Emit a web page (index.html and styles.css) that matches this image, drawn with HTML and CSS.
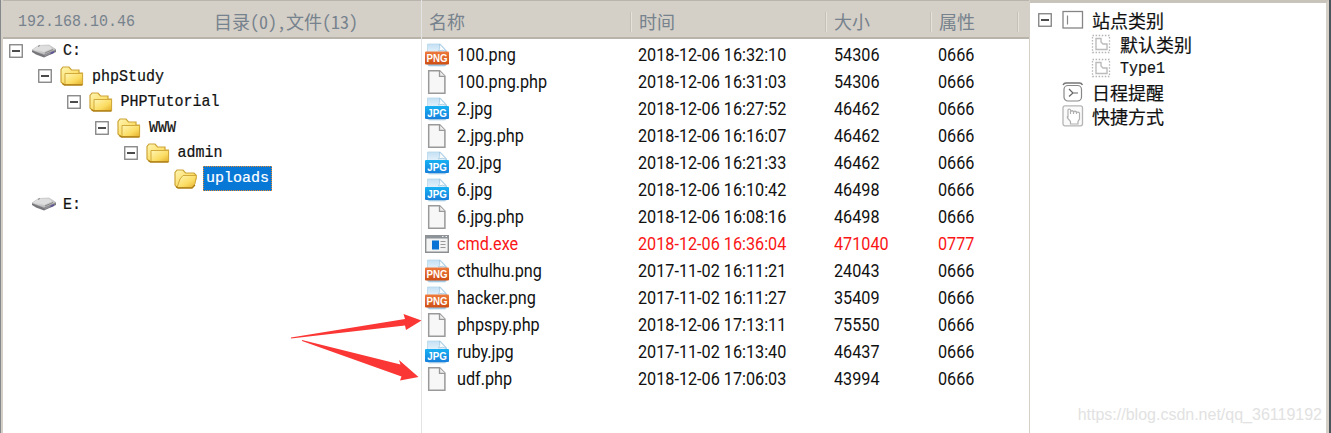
FILE: index.html
```
<!DOCTYPE html>
<html lang="zh-CN">
<head>
<meta charset="utf-8">
<title>文件管理</title>
<link rel="stylesheet" href="styles.css">
</head>
<body>
<svg class="defs" width="0" height="0">
  <defs>
    <linearGradient id="gold" x1="0" y1="0" x2="1" y2="1"><stop offset="0" stop-color="#fff6b4"/><stop offset=".6" stop-color="#fbdc62"/><stop offset="1" stop-color="#e3b02c"/></linearGradient>
    <linearGradient id="paper" x1="0" y1="0" x2="0" y2="1"><stop offset="0" stop-color="#c3e0f4"/><stop offset=".5" stop-color="#eef7fd"/><stop offset="1" stop-color="#8fbddd"/></linearGradient>
    <linearGradient id="blue" x1="0" y1="0" x2="0" y2="1"><stop offset="0" stop-color="#17b1f3"/><stop offset="1" stop-color="#1780dc"/></linearGradient>
    <linearGradient id="orange" x1="0" y1="0" x2="0" y2="1"><stop offset="0" stop-color="#ee7a3c"/><stop offset="1" stop-color="#cf4d13"/></linearGradient>
    <linearGradient id="metal" x1="0" y1="0" x2="1" y2="1"><stop offset="0" stop-color="#f4f4f4"/><stop offset="1" stop-color="#a9a9a9"/></linearGradient>
    <symbol id="minus" viewBox="0 0 14 14"><rect x=".75" y=".75" width="12.5" height="12.5" fill="#fff" stroke="#808080" stroke-width="1.3"/><path d="M3 7h8" stroke="#111" stroke-width="1.5"/></symbol>
    <symbol id="drive" viewBox="0 0 24 14"><path d="M0 6v2l4 2.500 8 3 12-5.500V5z" fill="#77777b"/><path d="M0 6 6.500 1.500 17 1l7 4.500-12 5z" fill="url(#metal)" stroke="#b5b5b5" stroke-width=".6"/><path d="M4 5.500 9.500 2.500 17 2l3 2.500-8 3.500z" fill="#dedede"/><path d="m6 2.500 2-1M13 9l8-3.500" stroke="#888"/><path d="m12.500 12.500 9.500-4.500V6.500L12.500 11z" fill="#92929a"/><path d="M18.500 8.500 22 7v2l-3.500 1.500z" fill="#5e5596"/></symbol>
    <symbol id="folder" viewBox="0 0 24 20"><path d="M1 16V3.500L3 1h6l2.500 3H19v3h3.500v11.500h-19z" fill="url(#gold)" stroke="#cda438" stroke-width="1.200"/><path d="M5 18.500V7.500h17.500v11z" fill="url(#gold)" stroke="#d2aa3c"/><path d="M2.500 17.500 4.500 19h18" fill="none" stroke="#b07f12" stroke-width="1.500"/></symbol>
    <symbol id="folder-open" viewBox="0 0 24 20"><path d="M1 16V3.500L3 1h6l2.500 3H20l2 2v4L18.500 18.500H3z" fill="url(#gold)" stroke="#cda438" stroke-width="1.200"/><path d="m3 18.500 3-8.500 3-3.500h13.500l-1.500 8-2.500 4z" fill="url(#gold)" stroke="#d2aa3c"/><path d="M2 17.500 4 19h14l3-3" fill="none" stroke="#b07f12" stroke-width="1.300"/></symbol>
    <symbol id="file" viewBox="0 0 24 24"><path d="M3.700.8h11l5.200 5.300v17.100H3.700z" fill="#f7f7f7" stroke="#999" stroke-width="1.500"/><path d="M14.500 1v5.300H20" fill="#eee" stroke="#999" stroke-width="1.300"/></symbol>
    <symbol id="png" viewBox="0 0 24 24"><path d="M2.500 1h12.800l6.200 6.500V21q0 2-2 2h-15q-2 0-2-2z" fill="url(#paper)" stroke="#b8d7eb" stroke-width=".8"/><path d="M14.500 1q1 5-1 7 4-2 8 .5z" fill="#fff" stroke="#8dbbd9" stroke-width=".6"/><rect y="8.500" width="24" height="13" rx="1" fill="url(#orange)"/><text x="12" y="19" class="badge-text" textLength="21" lengthAdjust="spacingAndGlyphs">PNG</text></symbol>
    <symbol id="jpg" viewBox="0 0 24 24"><path d="M2.500 1h12.800l6.200 6.500V21q0 2-2 2h-15q-2 0-2-2z" fill="url(#paper)" stroke="#b8d7eb" stroke-width=".8"/><path d="M14.500 1q1 5-1 7 4-2 8 .5z" fill="#fff" stroke="#8dbbd9" stroke-width=".6"/><rect y="9" width="24" height="13" rx="1" fill="url(#blue)"/><text x="12" y="19.500" class="badge-text" textLength="19.500" lengthAdjust="spacingAndGlyphs">JPG</text></symbol>
    <symbol id="exe" viewBox="0 0 24 24"><path d="M.7 3.700h22.600v16.600H.7z" fill="#f3f3f3" stroke="#8d9091" stroke-width="1.400"/><path d="M0 3h24v3.500H0z" fill="#8d9396"/><path d="M17 4.500h1.500M20.500 4.500H22" stroke="#eee"/><rect x="7" y="8.500" width="7" height="9" fill="#0872d5"/><path d="M15.500 9.500h5M15.500 12.500h5M15.500 15.500h5" stroke="#999"/></symbol>
    <symbol id="panel" viewBox="0 0 22 22"><rect x="1" y="2.500" width="19.500" height="16.500" fill="#fff" stroke="#858585" stroke-width="1.300"/><path d="M5.500 6.500v9" stroke="#888" stroke-width="1.200"/></symbol>
    <symbol id="type" viewBox="0 0 20 20"><path d="M1.500 1.500h17v17h-17z" fill="none" stroke="#b5b5b5" stroke-width="1.300" stroke-dasharray="1.500 1.600"/><path d="M5 4.500h5v3.500l2 2h4v5.500H5z" fill="#fff" stroke="#bbb" stroke-width="1.400"/></symbol>
    <symbol id="clock" viewBox="0 0 22 22"><path d="M1 4q1-2 3-2h13.500q2 0 3 2" fill="none" stroke="#777" stroke-width="1.500"/><rect x="2" y="4.500" width="17.500" height="15.500" rx="4" fill="#fff" stroke="#888" stroke-width="1.200"/><path d="m7 8 4 4-4 3.500m4-3.500h5" fill="none" stroke="#666" stroke-width="1.200"/></symbol>
    <symbol id="hand" viewBox="0 0 22 22"><rect x="1" y=".8" width="19.500" height="20" rx="2" fill="#fafafa" stroke="#b5b5b5" stroke-width="1.300"/><path d="M6 12.500V5q0-1 1.200-1T8.500 5v4M8.500 9V6.500q1.500-1.500 3 0V9m0-2q1.500-1.500 3 0v2m0-1.500q2-1 3 .5v6l-1.500 2.500V19H8.500v-2.500L5.500 13q-.5-2 .5-1.500" fill="#fff" stroke="#b0b0b0" stroke-width="1.200"/></symbol>
  </defs>
</svg>
<main class="window">
  <section class="tree-pane">
    <header class="bar tree-bar"><span class="ip">192.168.10.46</span><span class="count">目录(0),文件(13)</span></header>
    <ul class="tree">
      <li class="node d0"><svg class="box"><use href="#minus"/></svg><svg class="drive"><use href="#drive"/></svg><span>C:</span></li>
      <li class="node d1"><svg class="box"><use href="#minus"/></svg><svg class="folder"><use href="#folder"/></svg><span>phpStudy</span></li>
      <li class="node d2"><svg class="box"><use href="#minus"/></svg><svg class="folder"><use href="#folder"/></svg><span>PHPTutorial</span></li>
      <li class="node d3"><svg class="box"><use href="#minus"/></svg><svg class="folder"><use href="#folder"/></svg><span>WWW</span></li>
      <li class="node d4"><svg class="box"><use href="#minus"/></svg><svg class="folder"><use href="#folder"/></svg><span>admin</span></li>
      <li class="node d5"><svg class="folder"><use href="#folder-open"/></svg><span class="selected">uploads</span></li>
      <li class="node leaf"><svg class="drive"><use href="#drive"/></svg><span>E:</span></li>
    </ul>
  </section>
  <section class="list-pane">
    <header class="bar columns"><span>名称</span><span>时间</span><span>大小</span><span>属性</span></header>
    <div class="files">
      <div class="row"><svg class="icon"><use href="#png"/></svg><span>100.png</span><span>2018-12-06 16:32:10</span><span>54306</span><span>0666</span></div>
      <div class="row"><svg class="icon"><use href="#file"/></svg><span>100.png.php</span><span>2018-12-06 16:31:03</span><span>54306</span><span>0666</span></div>
      <div class="row"><svg class="icon"><use href="#jpg"/></svg><span>2.jpg</span><span>2018-12-06 16:27:52</span><span>46462</span><span>0666</span></div>
      <div class="row"><svg class="icon"><use href="#file"/></svg><span>2.jpg.php</span><span>2018-12-06 16:16:07</span><span>46462</span><span>0666</span></div>
      <div class="row"><svg class="icon"><use href="#jpg"/></svg><span>20.jpg</span><span>2018-12-06 16:21:33</span><span>46462</span><span>0666</span></div>
      <div class="row"><svg class="icon"><use href="#jpg"/></svg><span>6.jpg</span><span>2018-12-06 16:10:42</span><span>46498</span><span>0666</span></div>
      <div class="row"><svg class="icon"><use href="#file"/></svg><span>6.jpg.php</span><span>2018-12-06 16:08:16</span><span>46498</span><span>0666</span></div>
      <div class="row alert"><svg class="icon"><use href="#exe"/></svg><span>cmd.exe</span><span>2018-12-06 16:36:04</span><span>471040</span><span>0777</span></div>
      <div class="row"><svg class="icon"><use href="#png"/></svg><span>cthulhu.png</span><span>2017-11-02 16:11:21</span><span>24043</span><span>0666</span></div>
      <div class="row"><svg class="icon"><use href="#png"/></svg><span>hacker.png</span><span>2017-11-02 16:11:27</span><span>35409</span><span>0666</span></div>
      <div class="row"><svg class="icon"><use href="#file"/></svg><span>phpspy.php</span><span>2018-12-06 17:13:11</span><span>75550</span><span>0666</span></div>
      <div class="row"><svg class="icon"><use href="#jpg"/></svg><span>ruby.jpg</span><span>2017-11-02 16:13:40</span><span>46437</span><span>0666</span></div>
      <div class="row"><svg class="icon"><use href="#file"/></svg><span>udf.php</span><span>2018-12-06 17:06:03</span><span>43994</span><span>0666</span></div>
    </div>
  </section>
  <aside class="side-pane">
    <ul class="side">
      <li><svg class="box"><use href="#minus"/></svg><svg class="side-icon"><use href="#panel"/></svg><span>站点类别</span></li>
      <li class="child"><svg class="type-icon"><use href="#type"/></svg><span>默认类别</span></li>
      <li class="child"><svg class="type-icon"><use href="#type"/></svg><span class="latin">Type1</span></li>
      <li class="item"><svg class="side-icon"><use href="#clock"/></svg><span>日程提醒</span></li>
      <li class="item"><svg class="side-icon"><use href="#hand"/></svg><span>快捷方式</span></li>
    </ul>
  </aside>
  <svg class="arrows" viewBox="0 0 135 75"><path d="M1 27.500 115 9l-1.500-5L131.500 10.500 116 20l-1-4.500L1 28.500z"/><path d="M12 30 110.500 54.500l-1.500-4.500 19.500 17-18.500 3.500 1.500-4L12 31z"/></svg>
  <div class="watermark">https://blog.csdn.net/qq_36119192</div>
</main>
</body>
</html>
```
FILE: styles.css
```
* { box-sizing: border-box; }
body { margin: 0; background: #fff; overflow: hidden; }
ul { list-style: none; margin: 0; padding: 0; }
svg { display: block; flex: none; }
.defs { position: absolute; }
.badge-text { font: bold 11px "Liberation Sans", sans-serif; fill: #fff; text-anchor: middle; }

.window {
  position: relative;
  display: flex;
  width: 1331px;
  height: 433px;
  border-left: 1px solid #85898b;
  border-right: 2px solid #4b5559;
  background: #fff;
}
.bar {
  display: flex;
  align-items: center;
  height: 39px;
  padding-top: 5px;
  border-top: 1px solid #b9b5ae;
  border-bottom: 2px solid #b9b4aa;
  background: #d4cfc7;
  color: #76828d;
  white-space: pre;
}
.tree-pane { width: 420px; border-left: 2px solid #d4cfc7; }
.tree-bar { padding-left: 15px; }
.ip { width: 196px; padding-top: 1px; font: 15px/20px "Liberation Mono", monospace; transform: scaleY(1.15); }
.count { font: 18px/18px "Noto Sans Mono CJK SC", "Noto Sans CJK SC", sans-serif; padding-bottom: 2px; }

.tree { margin-top: -1px; font: 15px/25.600px "Liberation Mono", monospace; color: #111; }
.node { display: flex; align-items: center; height: 25.600px; -webkit-text-stroke: .2px; }
.node span { padding-top: 2px; transform: scaleY(1.1); }
.box { width: 14px; height: 14px; }
.drive { width: 24px; height: 14px; margin: 0 7px 0 9px; }
.folder { width: 24px; height: 20px; margin: 0 8px 0 8px; }
.d0 { padding-left: 6px; }
.d1 { padding-left: 35px; }
.d2 { padding-left: 63.500px; }
.d3 { padding-left: 92px; }
.d4 { padding-left: 120.500px; }
.d5 { padding-left: 163px; }
.leaf { padding-left: 20px; }
.node .selected { height: 25px; line-height: 24px; margin-left: -3px; padding: 1px 3px 0; background: #0878d7; color: #fff; outline: 1px dotted #e88a2c; outline-offset: -1px; transform: none; }

.list-pane { width: 609px; border-left: 1px solid #e3e3e3; border-right: 1px solid #d4cfc7; }
.columns { display: grid; grid-template-columns: 210px 195px 105px 87px; font: 18px "Noto Sans CJK SC", sans-serif; }
.columns span { height: 20px; padding-left: 7px; line-height: 18px; border-right: 1px solid #e5e2dc; box-shadow: inset -1px 0 #c6c1b8; }
.files { padding-top: 2px; font: 18px/27px Roboto, sans-serif; color: #111; }
.row { display: grid; grid-template-columns: 32px 181px 196px 104px 70px; align-items: center; height: 27px; padding-left: 3px; }
.row span { white-space: nowrap; transform: scaleX(.9); transform-origin: left; }
.icon { width: 24px; height: 24px; }
.alert { color: #fa1616; }

.side-pane { flex: 1; border-top: 3px solid #c8c3bb; border-right: 3px solid #d4cfc7; padding-top: 5px; }
.side { font: 18px/24px "Noto Sans CJK SC", sans-serif; color: #111; -webkit-text-stroke: .2px; }
.side li { display: flex; align-items: center; height: 24px; padding-left: 8px; }
.side-icon { width: 22px; height: 22px; margin: 0 8px 0 10px; }
.side .item { padding-left: 22px; }
.side .child { padding-left: 61px; }
.side .latin { padding-top: 4px; font: 15px/24px "Liberation Mono", monospace; transform: scaleY(1.1); }
.type-icon { width: 20px; height: 20px; margin-right: 9px; }

.arrows { position: absolute; left: 289px; top: 310px; width: 135px; height: 75px; fill: #fb3735; }
.watermark { position: absolute; right: 7px; top: 405px; font: 16px/20px "Liberation Sans", sans-serif; color: #e2e2e2; white-space: nowrap; }
```
